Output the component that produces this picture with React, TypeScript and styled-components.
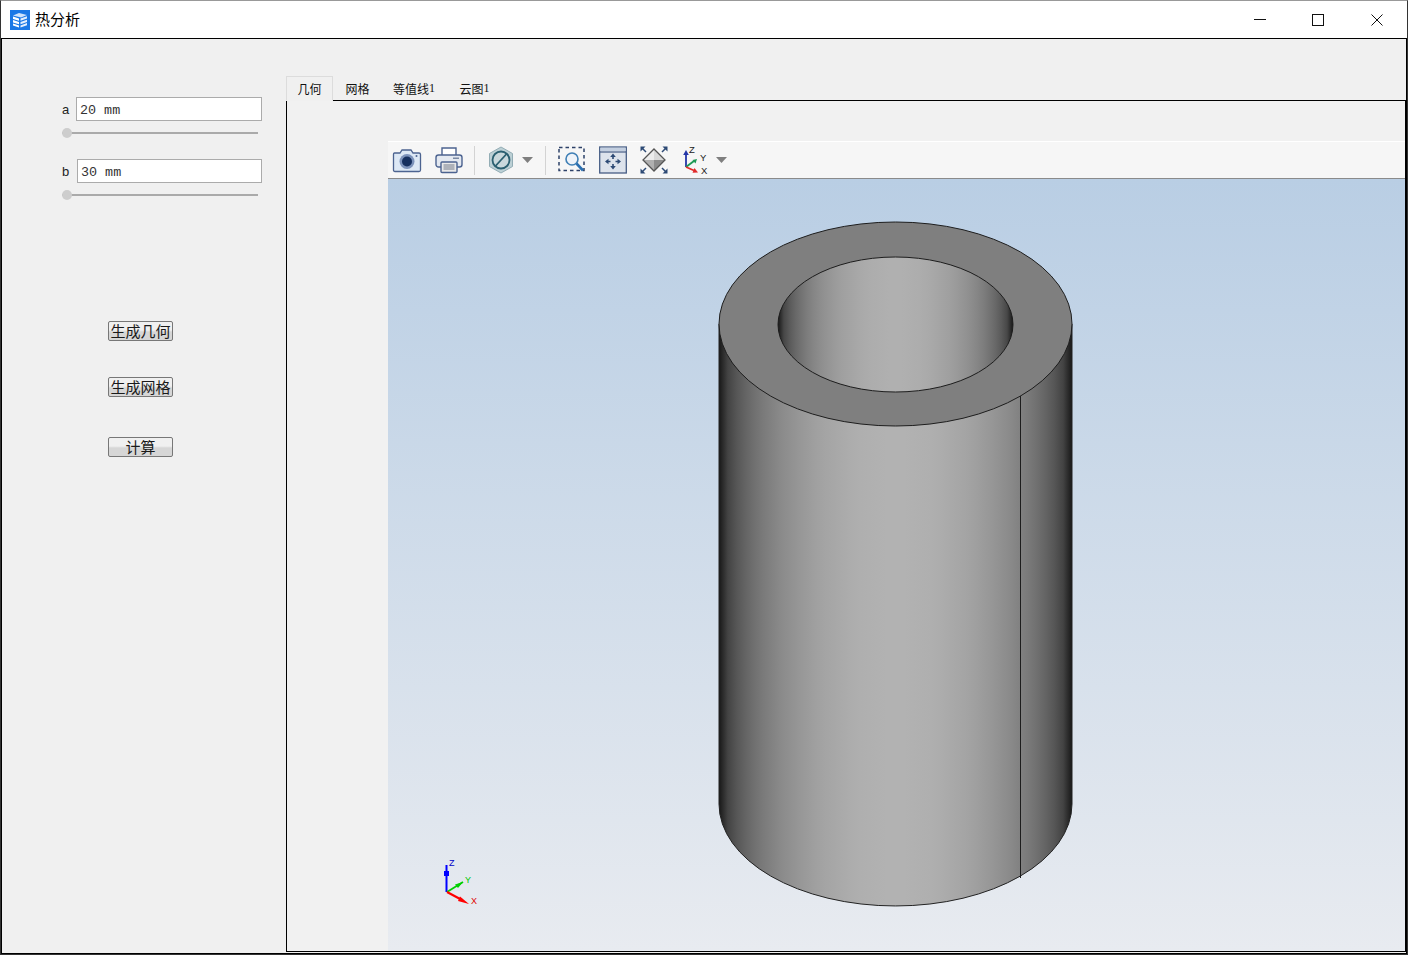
import React from "react";
import styled, { createGlobalStyle } from "styled-components";

const GlobalStyle = createGlobalStyle`
  html, body {
    margin: 0;
    padding: 0;
    background: #fff;
  }
  body {
    font-family: "Noto Sans CJK SC", "Liberation Sans", sans-serif;
    overflow: hidden;
  }
`;

const Window = styled.div`
  width: 1408px;
  height: 955px;
  box-sizing: border-box;
  display: flex;
  flex-direction: column;
  background: #fff;
  border: 1px solid #333;
  border-top-color: #999;
`;

const TitleBar = styled.div`
  height: 37px;
  flex: none;
  display: flex;
  align-items: center;
  justify-content: space-between;
  padding: 0 1px 0 9px;
  background: #fff;
  border-bottom: 1px solid #000;
`;

const TitleLeft = styled.div`
  display: flex;
  align-items: center;
  gap: 5px;
`;

const TitleText = styled.span`
  font-size: 15px;
  line-height: 20px;
  color: #000;
  padding-bottom: 2px;
`;

const WindowControls = styled.div`
  display: flex;
  align-items: center;
`;

const ControlButton = styled.div`
  width: 58.5px;
  height: 36px;
  display: flex;
  align-items: center;
  justify-content: center;
`;

const Body = styled.div`
  flex: 1;
  min-height: 0;
  display: flex;
  background: #f0f0f0;
  border: 1px solid #000;
  border-top: none;
  padding-bottom: 1px;
`;

const SidePanel = styled.div`
  width: 284px;
  flex: none;
  display: flex;
  flex-direction: column;
  padding: 58px 0 0 60px;
  box-sizing: border-box;
`;

const Param = styled.div`
  width: 200px;
  margin-bottom: 20px;
  display: flex;
  flex-direction: column;
  gap: 6px;
`;

const ParamRow = styled.div`
  display: flex;
  align-items: center;
  justify-content: space-between;
`;

const ParamLabel = styled.span`
  font-family: "Liberation Sans", sans-serif;
  font-size: 13px;
  color: #222;
  padding-top: 1px;
`;

const ParamInput = styled.div<{ $width: number }>`
  width: ${(p) => p.$width}px;
  height: 24px;
  box-sizing: border-box;
  border: 1px solid #ababab;
  background: #fff;
  padding: 3px 0 0 3px;
  font-family: "Liberation Mono", monospace;
  font-size: 13.4px;
  line-height: 19px;
  color: #333;
`;

const Slider = styled.div`
  position: relative;
  width: 196px;
  height: 12px;
  display: flex;
  align-items: center;

  &::before {
    content: "";
    width: 100%;
    height: 2px;
    background: #aaa;
  }

  &::after {
    content: "";
    position: absolute;
    left: 0;
    top: 1px;
    width: 10px;
    height: 10px;
    border-radius: 50%;
    background: #cdcdcd;
  }
`;

const ButtonColumn = styled.div`
  display: flex;
  flex-direction: column;
  align-items: flex-start;
  margin: 100px 0 0 46px;
`;

const ActionButton = styled.button<{ $gap: number }>`
  width: 65px;
  height: 20px;
  margin-bottom: ${(p) => p.$gap}px;
  padding: 0;
  box-sizing: border-box;
  border: 1px solid #777;
  border-radius: 2px;
  background: linear-gradient(#f0f0f0 0 45%, #d6d6d6 55% 100%);
  font-family: "Noto Sans CJK SC", sans-serif;
  font-size: 15px;
  line-height: 18px;
  color: #1a1a1a;
  white-space: nowrap;
`;

const TabArea = styled.div`
  flex: 1;
  min-width: 0;
  display: flex;
  flex-direction: column;
  padding-top: 37px;
`;

const TabStrip = styled.div`
  height: 24px;
  flex: none;
  display: flex;
  position: relative;
  z-index: 1;
`;

const Tab = styled.div<{ $active?: boolean; $width: number }>`
  width: ${(p) => p.$width}px;
  height: ${(p) => (p.$active ? 25 : 24)}px;
  box-sizing: border-box;
  display: flex;
  align-items: center;
  justify-content: center;
  font-size: 12px;
  color: #111;
  background: #f0f0f0;
  border: 1px solid ${(p) => (p.$active ? "#dcdcdc" : "transparent")};
  border-bottom: ${(p) => (p.$active ? "1px solid #f0f0f0" : "none")};
`;

const TabOne = styled.span`
  font-family: "Liberation Serif", serif;
  font-size: 12px;
`;

const Pane = styled.div`
  flex: 1;
  min-height: 0;
  display: flex;
  flex-direction: column;
  box-sizing: border-box;
  border: 1px solid #000;
  padding: 40px 0 0 101px;
  background: #f1f1f1;
`;

const Viewer = styled.div`
  flex: 1;
  min-height: 0;
  display: flex;
  flex-direction: column;
`;

const Toolbar = styled.div`
  height: 38px;
  flex: none;
  box-sizing: border-box;
  display: flex;
  align-items: center;
  background: #f6f6f6;
  border-bottom: 1px solid #8a8a8a;
  border-top: 1px solid #fff;
  padding-left: 4px;
`;

const ToolIcon = styled.div<{ $width?: number; $gap?: number }>`
  width: ${(p) => p.$width ?? 30}px;
  height: 30px;
  margin-right: ${(p) => p.$gap ?? 12}px;
  flex: none;
  display: flex;
  align-items: center;
  justify-content: center;
`;

const ToolDivider = styled.div`
  width: 1px;
  height: 29px;
  flex: none;
  background: #d3d3d3;
  margin-right: 12px;
`;

const Canvas = styled.div`
  position: relative;
  flex: 1;
  min-height: 0;
  background: linear-gradient(#b9cee4, #e8ebf0);
`;

const ModelSvg = styled.svg`
  position: absolute;
  left: 329px;
  top: 41px;
`;

const TriadSvg = styled.svg`
  position: absolute;
  left: 50px;
  bottom: 42px;
`;

// cylinder shading: bright along the axis, falling away like cos(angle) at the silhouette
const shadeStops = (id: string, low: number, high: number, power: number) => {
  const stops: React.ReactElement[] = [];
  for (let i = 0; i <= 40; i++) {
    const t = i / 20 - 1;
    const v = Math.round(low + (high - low) * Math.pow(1 - t * t, power));
    stops.push(<stop key={i} offset={i / 40} stopColor={`rgb(${v},${v},${v})`} />);
  }
  return <linearGradient id={id}>{stops}</linearGradient>;
};

function AppIcon() {
  return (
    <svg width="20" height="20" viewBox="0 0 20 20">
      <rect width="20" height="20" fill="#1a78e6" />
      <path d="M3 5.5 L9 3 L17 5 L11 7.5 Z" fill="#cfe3fb" />
      <path d="M3 6.5 L9 8.5 V10.8 L3 9 Z M3 10 L9 12 V14.3 L3 12.4 Z M3 13.4 L9 15.4 V17.4 L3 15.6 Z" fill="#fff" />
      <path d="M10.5 8.5 L17 6.2 V8.4 L10.5 10.7 Z M10.5 12 L17 9.7 V11.9 L10.5 14.2 Z M10.5 15.4 L17 13.1 V15.2 L10.5 17.5 Z" fill="#e4effd" />
    </svg>
  );
}

function CameraIcon() {
  return (
    <svg width="30" height="26" viewBox="0 0 30 26">
      <path d="M2.5 6 H8 L10 3 H19 L21 6 H27 Q28.5 6 28.5 7.5 V23 Q28.5 24.5 27 24.5 H3 Q1.5 24.5 1.5 23 V7.5 Q1.5 6 2.5 6 Z" fill="#dde8f5" stroke="#4c6390" strokeWidth="1.3" />
      <circle cx="15" cy="14.5" r="7.5" fill="#7d93bb" />
      <circle cx="15" cy="14.5" r="5" fill="#16305f" />
      <circle cx="24.5" cy="9" r="1" fill="#4c6390" />
    </svg>
  );
}

function PrinterIcon() {
  return (
    <svg width="28" height="28" viewBox="0 0 28 28">
      <path d="M7 9 V2 H21 V9" fill="#fff" stroke="#4c6390" strokeWidth="1.4" />
      <rect x="1" y="9" width="26" height="12" rx="2.5" fill="#e4e9f1" stroke="#4c6390" strokeWidth="1.4" />
      <rect x="18" y="11.5" width="6" height="1.5" fill="#7b8aa5" />
      <rect x="6" y="16" width="16" height="10.5" rx="1" fill="#e9e9e9" stroke="#4c6390" strokeWidth="1.4" />
      <path d="M8.5 19 H19.5 M8.5 21 H19.5 M8.5 23 H19.5" stroke="#9aa0aa" strokeWidth="1.3" />
    </svg>
  );
}

function NoSectionIcon() {
  return (
    <svg width="26" height="28" viewBox="0 0 26 28">
      <path d="M13 1 L24.5 7.5 V20.5 L13 27 L1.5 20.5 V7.5 Z" fill="#bcd0d5" stroke="#93adb5" strokeWidth="1" />
      <circle cx="13" cy="14" r="8.5" fill="#c9d8dc" stroke="#2a5f70" strokeWidth="1.8" />
      <path d="M7.5 20 L18.5 8" stroke="#2a5f70" strokeWidth="1.8" />
    </svg>
  );
}

function DropArrow() {
  return (
    <svg width="11" height="6" viewBox="0 0 11 6">
      <path d="M0 0 H11 L5.5 6 Z" fill="#7f7f7f" />
    </svg>
  );
}

function ZoomBoxIcon() {
  return (
    <svg width="28" height="28" viewBox="0 0 28 28">
      <rect x="1" y="1.5" width="25" height="23" fill="none" stroke="#2d4168" strokeWidth="1.5" strokeDasharray="3.5 3" />
      <circle cx="14" cy="13" r="6" fill="#eef3f9" stroke="#3f7fb5" strokeWidth="1.6" />
      <path d="M18.5 17.5 L25 24.5" stroke="#2a6fb0" strokeWidth="2.6" />
    </svg>
  );
}

function PanIcon() {
  return (
    <svg width="28" height="28" viewBox="0 0 28 28">
      <rect x="0.7" y="1" width="26.6" height="26" fill="#dde3ec" stroke="#475d85" strokeWidth="1.3" />
      <rect x="1.4" y="1.7" width="25.2" height="3.3" fill="#c3cfe0" />
      <path d="M1 6 H27" stroke="#475d85" strokeWidth="1.2" />
      <path d="M14 9 V13 M14 18 V22 M7.5 15.5 H11.5 M16.5 15.5 H20.5" stroke="#2d4a75" strokeWidth="1.6" />
      <path d="M14 7.5 L16.8 11 H11.2 Z M14 23.5 L16.8 20 H11.2 Z M6 15.5 L9.5 12.7 V18.3 Z M22 15.5 L18.5 12.7 V18.3 Z" fill="#2d4a75" />
    </svg>
  );
}

function FitIcon() {
  return (
    <svg width="28" height="28" viewBox="0 0 28 28">
      <path d="M14 3 L25 14 H3 Z" fill="#ececec" />
      <path d="M14 3 L25 14 H14 Z" fill="#d8d8d8" />
      <path d="M3 14 H14 V25 Z" fill="#b0b0b0" />
      <path d="M14 14 H25 L14 25 Z" fill="#8c8c8c" />
      <path d="M14 3 L25 14 L14 25 L3 14 Z" fill="none" stroke="#555" strokeWidth="1.3" />
      <path d="M0.5 5.5 V0.5 H5.5 Z M27.5 5.5 V0.5 H22.5 Z M0.5 22.5 V27.5 H5.5 Z M27.5 22.5 V27.5 H22.5 Z" fill="#2d4a75" />
      <path d="M2 2 L6 6 M26 2 L22 6 M2 26 L6 22 M26 26 L22 22" stroke="#2d4a75" strokeWidth="1.5" />
    </svg>
  );
}

function ViewAxisIcon() {
  return (
    <svg width="26" height="30" viewBox="0 0 26 30">
      <path d="M4 22 V8" stroke="#2436a8" strokeWidth="1.8" />
      <path d="M4 5 L6.8 10 H1.2 Z" fill="#2436a8" />
      <path d="M4 22 L12 16" stroke="#1c9a54" strokeWidth="1.8" />
      <path d="M15 14 L13.5 18.5 L10.5 15 Z" fill="#1c9a54" />
      <path d="M4 22 L12 25.5" stroke="#e02a2a" strokeWidth="1.8" />
      <path d="M16 27.6 L10.5 27.8 L12.5 23 Z" fill="#e02a2a" />
      <text x="7" y="7.5" fontFamily="Liberation Sans, sans-serif" fontSize="9.5" fill="#222">Z</text>
      <text x="18" y="15.5" fontFamily="Liberation Sans, sans-serif" fontSize="9.5" fill="#222">Y</text>
      <text x="19" y="28.5" fontFamily="Liberation Sans, sans-serif" fontSize="9.5" fill="#222">X</text>
    </svg>
  );
}

function Tube() {
  const cx = 178.5;
  const topY = 104;
  const bottomY = 584;
  const rx = 176.5;
  const ry = 102;
  return (
    <ModelSvg width="358" height="690" viewBox="0 0 358 690">
      <defs>
        {shadeStops("tubeSide", 24, 178, 0.55)}
        {shadeStops("tubeBore", 24, 176, 0.5)}
      </defs>
      <path
        d={`M${cx - rx} ${topY} V${bottomY} A${rx} ${ry} 0 0 0 ${cx + rx} ${bottomY} V${topY} Z`}
        fill="url(#tubeSide)"
        stroke="#222"
        strokeWidth="1"
      />
      <path d={`M303.5 ${topY + 70} V658`} stroke="#1d1d1d" strokeWidth="1" />
      <ellipse cx={cx} cy={topY} rx={rx} ry={ry} fill="#7f7f7f" stroke="#1d1d1d" strokeWidth="1" />
      <ellipse cx={cx} cy={topY + 0.5} rx={117.5} ry={67.5} fill="url(#tubeBore)" stroke="#1d1d1d" strokeWidth="1" />
    </ModelSvg>
  );
}

function Triad() {
  return (
    <TriadSvg width="42" height="50" viewBox="0 0 42 50">
      <path d="M8.5 33 V6" stroke="#0000ff" strokeWidth="2" />
      <rect x="6" y="12" width="5" height="5" fill="#0000ff" />
      <path d="M9 33 L25 23" stroke="#00d000" strokeWidth="1.8" />
      <path d="M17 25.5 L25 23 L20 29 Z" fill="#00d000" />
      <path d="M9 33 L24 41" stroke="#ff0000" strokeWidth="2" />
      <path d="M22 37.5 L31 45 L20 42 Z" fill="#ff0000" />
      <text x="11" y="7" fontFamily="Liberation Sans, sans-serif" fontSize="9" fill="#0000c8">Z</text>
      <text x="27" y="24" fontFamily="Liberation Sans, sans-serif" fontSize="9" fill="#00c800">Y</text>
      <text x="33" y="45" fontFamily="Liberation Sans, sans-serif" fontSize="9" fill="#e00000">X</text>
    </TriadSvg>
  );
}

export default function App() {
  return (
    <>
      <GlobalStyle />
      <Window>
        <TitleBar>
          <TitleLeft>
            <AppIcon />
            <TitleText>热分析</TitleText>
          </TitleLeft>
          <WindowControls>
            <ControlButton>
              <svg width="12" height="12" viewBox="0 0 12 12"><path d="M0 5.5 H12" stroke="#111" strokeWidth="1" /></svg>
            </ControlButton>
            <ControlButton>
              <svg width="12" height="12" viewBox="0 0 12 12"><rect x="0.5" y="0.5" width="11" height="11" fill="none" stroke="#111" strokeWidth="1" /></svg>
            </ControlButton>
            <ControlButton>
              <svg width="12" height="12" viewBox="0 0 12 12"><path d="M0.5 0.5 L11.5 11.5 M11.5 0.5 L0.5 11.5" stroke="#111" strokeWidth="1" /></svg>
            </ControlButton>
          </WindowControls>
        </TitleBar>
        <Body>
          <SidePanel>
            <Param>
              <ParamRow>
                <ParamLabel>a</ParamLabel>
                <ParamInput $width={186}>20 mm</ParamInput>
              </ParamRow>
              <Slider />
            </Param>
            <Param>
              <ParamRow>
                <ParamLabel>b</ParamLabel>
                <ParamInput $width={185}>30 mm</ParamInput>
              </ParamRow>
              <Slider />
            </Param>
            <ButtonColumn>
              <ActionButton $gap={36}>生成几何</ActionButton>
              <ActionButton $gap={40}>生成网格</ActionButton>
              <ActionButton $gap={0}>计算</ActionButton>
            </ButtonColumn>
          </SidePanel>
          <TabArea>
            <TabStrip>
              <Tab $active $width={47}>几何</Tab>
              <Tab $width={49}>网格</Tab>
              <Tab $width={64}>等值线<TabOne>1</TabOne></Tab>
              <Tab $width={57}>云图<TabOne>1</TabOne></Tab>
            </TabStrip>
            <Pane>
              <Viewer>
                <Toolbar>
                  <ToolIcon><CameraIcon /></ToolIcon>
                  <ToolIcon $gap={10}><PrinterIcon /></ToolIcon>
                  <ToolDivider />
                  <ToolIcon $width={28} $gap={7}><NoSectionIcon /></ToolIcon>
                  <ToolIcon $width={11} $gap={12}><DropArrow /></ToolIcon>
                  <ToolDivider />
                  <ToolIcon $width={28} $gap={13}><ZoomBoxIcon /></ToolIcon>
                  <ToolIcon $width={28} $gap={13}><PanIcon /></ToolIcon>
                  <ToolIcon $width={28} $gap={14}><FitIcon /></ToolIcon>
                  <ToolIcon $width={26} $gap={8}><ViewAxisIcon /></ToolIcon>
                  <ToolIcon $width={11} $gap={0}><DropArrow /></ToolIcon>
                </Toolbar>
                <Canvas>
                  <Tube />
                  <Triad />
                </Canvas>
              </Viewer>
            </Pane>
          </TabArea>
        </Body>
      </Window>
    </>
  );
}
